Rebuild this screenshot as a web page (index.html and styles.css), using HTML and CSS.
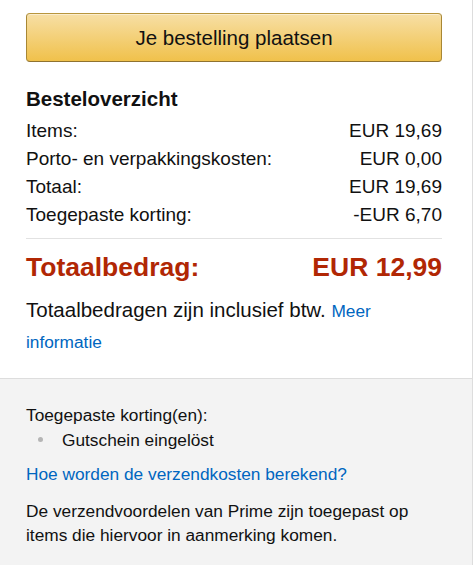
FILE: index.html
```html
<!DOCTYPE html>
<html lang="nl">
<head>
<meta charset="utf-8">
<title>Besteloverzicht</title>
<link rel="stylesheet" href="styles.css">
</head>
<body>
<div class="box">
  <section class="summary">
    <button class="place-order" type="button">Je bestelling plaatsen</button>
    <h3 class="summary-title">Besteloverzicht</h3>
    <div class="rows">
      <div class="row"><span>Items:</span><span>EUR 19,69</span></div>
      <div class="row"><span>Porto- en verpakkingskosten:</span><span>EUR 0,00</span></div>
      <div class="row"><span>Totaal:</span><span>EUR 19,69</span></div>
      <div class="row"><span>Toegepaste korting:</span><span>-EUR 6,70</span></div>
    </div>
    <div class="total-row"><span>Totaalbedrag:</span><span>EUR 12,99</span></div>
    <p class="vat">Totaalbedragen zijn inclusief btw. <a class="link small-link" href="#">Meer informatie</a></p>
  </section>
  <section class="extra">
    <div class="line">Toegepaste korting(en):</div>
    <ul class="discounts">
      <li>Gutschein eingelöst</li>
    </ul>
    <a class="link shipping-link" href="#">Hoe worden de verzendkosten berekend?</a>
    <p class="prime">De verzendvoordelen van Prime zijn toegepast op items die hiervoor in aanmerking komen.</p>
  </section>
</div>
</body>
</html>
```
FILE: styles.css
```css
* {
  box-sizing: border-box;
}

html, body {
  margin: 0;
  padding: 0;
  background: #ffffff;
}

body {
  font-family: "Liberation Sans", Arial, Helvetica, sans-serif;
  color: #111111;
  width: 475px;
  height: 565px;
  overflow: hidden;
}

.box {
  width: 473px;
  min-height: 565px;
  border-right: 1px solid #dddddd;
  display: flex;
  flex-direction: column;
}

.summary {
  padding: 13px 30px 21px 26px;
  border-bottom: 1px solid #dddddd;
}

.place-order {
  display: block;
  width: 100%;
  height: 49px;
  margin: 0;
  padding: 0;
  font-family: inherit;
  font-size: 20.5px;
  color: #111111;
  background: linear-gradient(to bottom, #f7dfa5, #f0c14b);
  border: 1px solid;
  border-color: #b8963e #a88734 #8f7230;
  border-radius: 4px;
  box-shadow: inset 0 1px 0 rgba(255, 255, 255, 0.45);
  cursor: pointer;
}

.summary-title {
  margin: 23px 0 4px;
  font-size: 20.5px;
  line-height: 28px;
  font-weight: bold;
  color: #111111;
}

.rows {
  padding-bottom: 9px;
  border-bottom: 1px solid #e2e2e2;
}

.row {
  display: flex;
  justify-content: space-between;
  font-size: 19px;
  line-height: 28px;
}

.total-row {
  display: flex;
  justify-content: space-between;
  margin-top: 11px;
  font-size: 26.5px;
  line-height: 34px;
  font-weight: bold;
  color: #b12704;
}

.vat {
  margin: 11px 0 0;
  font-size: 20.5px;
  line-height: 30px;
}

.link {
  color: #0066c0;
  text-decoration: none;
}

.small-link {
  font-size: 17.3px;
}

.extra {
  flex: 1;
  background: #f3f3f3;
  padding: 24px 30px 0 26px;
  font-size: 17.3px;
  line-height: 24.5px;
}

.discounts {
  list-style: none;
  margin: 0;
  padding: 0;
}

.discounts li {
  display: flex;
  align-items: center;
}

.discounts li::before {
  content: "";
  width: 5px;
  height: 5px;
  border-radius: 50%;
  background: #b5b5b5;
  margin-left: 12px;
  margin-right: 19px;
  flex: none;
}

.shipping-link {
  display: block;
  margin-top: 9.5px;
}

.prime {
  margin: 12.5px 0 0;
}
```
